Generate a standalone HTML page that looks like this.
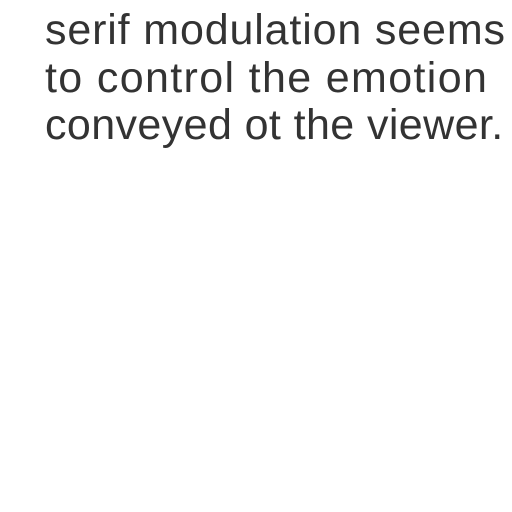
<!DOCTYPE html>
<html>
<head>
<meta charset="utf-8">
<style>
  html,body{margin:0;padding:0;background:#fff;width:512px;height:512px;overflow:hidden;}
  .t{
    position:absolute;left:45px;top:7px;
    font-family:"Liberation Sans",sans-serif;
    font-size:43px;line-height:47.5px;
    color:#333;white-space:nowrap;
  }
  .t div{height:47.5px;}
</style>
</head>
<body>
<div class="t"><div style="letter-spacing:0.85px">serif modulation seems</div><div style="letter-spacing:1.35px">to control the emotion</div><div style="letter-spacing:0.4px">conveyed ot the viewer.</div></div>
</body>
</html>
